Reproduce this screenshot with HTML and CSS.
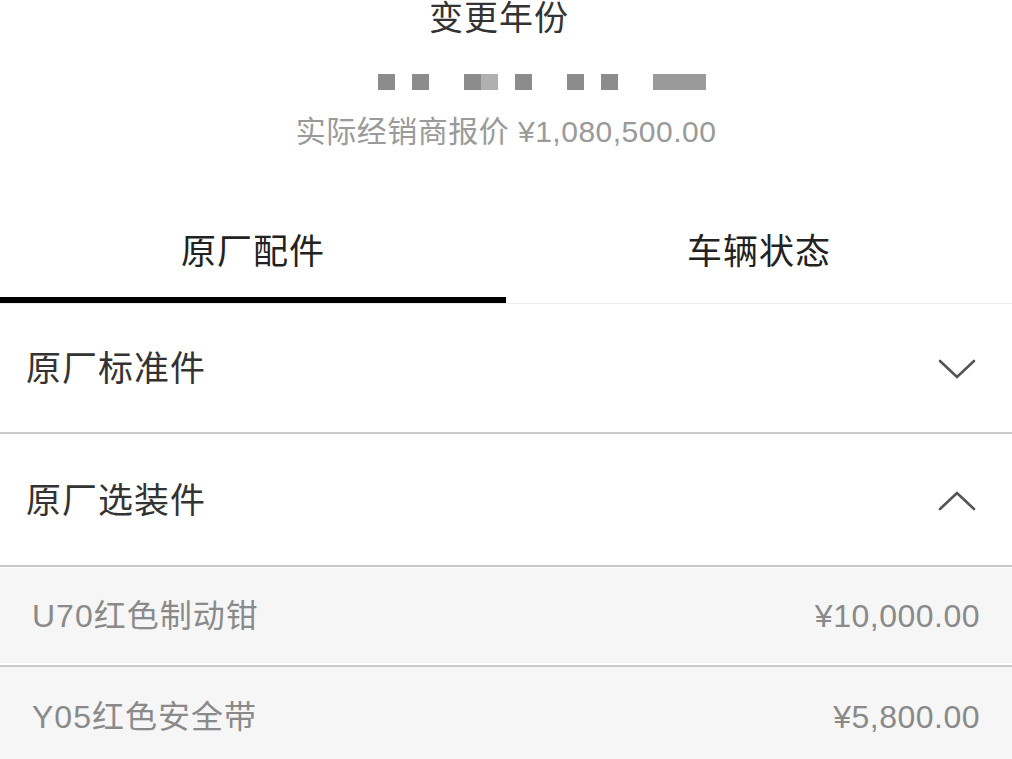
FILE: index.html
```html
<!DOCTYPE html>
<html lang="zh-CN">
<head>
<meta charset="utf-8">
<title>变更年份</title>
<link rel="stylesheet" href="styles.css">
</head>
<body>
<div class="page">
  <header class="header">
    <h1 class="title">变更年份</h1>
    <div class="masked" aria-hidden="true">
      <span class="blk"></span><span class="blk"></span>
      <span class="gap"></span>
      <span class="blk"></span><span class="blk light"></span><span class="blk"></span>
      <span class="gap"></span>
      <span class="blk"></span><span class="blk"></span>
      <span class="gap"></span>
      <span class="blk wide"></span>
    </div>
    <p class="subtitle">实际经销商报价 ¥1,080,500.00</p>
  </header>

  <nav class="tabs">
    <div class="tab active">原厂配件</div>
    <div class="tab">车辆状态</div>
  </nav>

  <section class="group">
    <div class="group-head first">
      <span class="group-title">原厂标准件</span>
      <svg class="chev" width="38" height="22" viewBox="0 0 38 22"><polyline points="2,3 19,19 36,3" fill="none" stroke="#555" stroke-width="2.6" stroke-linecap="round" stroke-linejoin="miter"/></svg>
    </div>
  </section>

  <section class="group">
    <div class="group-head second">
      <span class="group-title">原厂选装件</span>
      <svg class="chev" width="38" height="22" viewBox="0 0 38 22"><polyline points="2,19 19,3 36,19" fill="none" stroke="#555" stroke-width="2.6" stroke-linecap="round" stroke-linejoin="miter"/></svg>
    </div>
    <ul class="items">
      <li class="item first-item"><span class="name">U70红色制动钳</span><span class="price">¥10,000.00</span></li>
      <li class="item"><span class="name">Y05红色安全带</span><span class="price">¥5,800.00</span></li>
    </ul>
  </section>
</div>
</body>
</html>
```

FILE: styles.css
```css
* { box-sizing: border-box; }
html, body { margin: 0; padding: 0; background: #fff; }
body {
  font-family: "Liberation Sans", "Noto Sans CJK SC", sans-serif;
  color: #333;
  overflow: hidden;
}
.page { width: 1012px; height: 759px; overflow: hidden; }

.header { display: flex; flex-direction: column; align-items: center; }
.title {
  margin: 0;
  font-size: 34px;
  line-height: 36px;
  font-weight: 400;
  color: #333;
  letter-spacing: 1px;
  padding-right: 14px;
}
.masked {
  align-self: stretch;
  display: flex;
  margin-top: 38px;
  padding-left: 378px;
  height: 16px;
}
.blk { display: block; width: 17px; height: 16px; background: #8c8c8c; margin-right: 17px; }
.blk.light { background: #b0b0b0; margin-left: -17px; }
.blk.wide { width: 53px; background: #9a9a9a; }
.gap { display: block; width: 18px; }
.subtitle {
  margin: 22px 0 0;
  font-size: 30px;
  line-height: 40px;
  color: #9a9a9a;
  letter-spacing: 0.5px;
}

.tabs {
  display: flex;
  border-bottom: 1px solid #ececec;
  margin-top: 0;
}
.tab {
  flex: 1;
  text-align: center;
  font-size: 35px;
  line-height: 40px;
  color: #222;
  padding-top: 80px;
  padding-bottom: 25px;
  border-bottom: 6px solid transparent;
  letter-spacing: 1px;
}
.tab.active { border-bottom-color: #000; }

.group-head {
  display: flex;
  align-items: center;
  justify-content: space-between;
  padding: 0 36px 0 26px;
  border-bottom: 2px solid #c9c9c9;
}
.group-head.first { height: 130px; padding-top: 2px; }
.group-head.second { height: 133px; padding-top: 2px; }
.group-title { font-size: 35px; line-height: 40px; color: #333; letter-spacing: 1px; }
.chev { display: block; }

.items { list-style: none; margin: 0; padding: 0; background: #f6f6f6; border-top: 1px solid #fff; }
.item {
  display: flex;
  align-items: center;
  justify-content: space-between;
  height: 99px;
  padding: 0 32px 0 32px;
  font-size: 32px;
  line-height: 40px;
  color: #8a8a8a;
  border-bottom: 2px solid #c9c9c9;
  box-shadow: inset 0 -2px 0 #fff;
}
.item.first-item { padding-bottom: 2px; }
.item:last-child { border-bottom: none; box-shadow: none; }
.name { letter-spacing: 1px; }
.price { letter-spacing: 0.5px; }
```
